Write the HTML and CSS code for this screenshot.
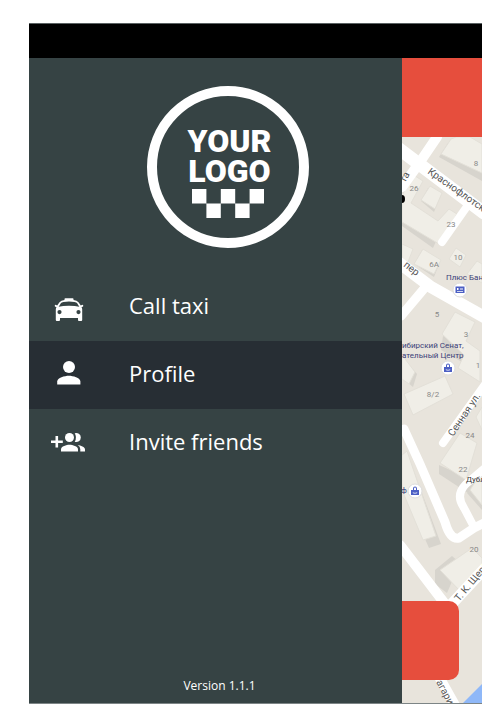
FILE: index.html
```
<!DOCTYPE html>
<html lang="en">
<head>
<meta charset="utf-8">
<meta name="viewport" content="width=device-width, initial-scale=1.0">
<title>Taxi</title>
<link rel="stylesheet" href="styles.css">
</head>
<body>
<div class="app">
  <div class="status-bar"></div>
  <div class="screen">
    <aside class="drawer">
      <div class="logo">
        <span class="logo-text">YOUR</span>
        <span class="logo-text">LOGO</span>
        <svg class="logo-checks" viewBox="0 0 5 2" aria-hidden="true">
          <path d="M0 0h1v1H0zM2 0h1v1H2zM4 0h1v1H4zM1 1h1v1H1zM3 1h1v1H3z"/>
        </svg>
      </div>

      <nav class="menu">
        <a class="menu-item" href="#taxi">
          <svg class="menu-icon" viewBox="0 0 40 40" aria-hidden="true">
            <path fill-rule="evenodd" d="M15.500 15v-1q0-.8.8-.8h7.400q.8 0 .8.800v1q3.500.2 5 2.200l2.300 3.300 1.700-.8q.7 0 .7.700v.8q0 .5-1.700.8.700 1 .7 2.500V35q0 1-1 1h-2.200q-1 0-1-1v-2H11v2q0 1-1 1H7.800q-1 0-1-1V24.500q0-1.500.7-2.500-1.700-.3-1.700-.8v-.8q0-.7.7-.7l1.700.8 2.300-3.300q1.500-2 5-2.200zM12 18l-2.300 3.800q4-1 10.300-1t10.300 1L28 18q-1-1.600-8-1.600T12 18zM10.500 25a2.100 2.100 0 1 0 0 4.200 2.100 2.100 0 0 0 0-4.200zM29.500 25a2.100 2.100 0 1 0 0 4.200 2.100 2.100 0 0 0 0-4.200z"/>
          </svg>
          <span>Call taxi</span>
        </a>
        <a class="menu-item active" href="#profile">
          <svg class="menu-icon" viewBox="0 -2 40 40" aria-hidden="true">
            <circle cx="20" cy="12" r="6"/>
            <path d="M8.200 29.500v-3c0-3.700 7.600-5.800 11.600-5.800s11.600 2.100 11.600 5.800v3z"/>
          </svg>
          <span>Profile</span>
        </a>
        <a class="menu-item" href="#invite">
          <svg class="menu-icon" viewBox="0 -2 40 40" aria-hidden="true">
            <path d="M6.500 13h2.600v4.500h4.700v2.600H9.100v4.500H6.500v-4.500H2v-2.600h4.500z"/>
            <circle cx="20.500" cy="14.500" r="4.500"/>
            <path d="M12 28.500v-2.300c0-3 5.500-4.500 8.500-4.500s8.500 1.500 8.500 4.500v2.300z"/>
            <path d="M25.700 10.300a4.500 4.500 0 1 1 0 8.400q2.600-4.200 0-8.400zM28.700 22c3 .4 7.300 1.900 7.300 4.400v2.100h-4.700v-2.300q0-2.600-2.600-4.200z"/>
          </svg>
          <span>Invite friends</span>
        </a>
      </nav>

      <p class="version">Version 1.1.1</p>
    </aside>

    <main class="content">
      <header class="toolbar"></header>
      <div class="map">
        <svg class="map-canvas" viewBox="402 137 80 566" preserveAspectRatio="xMinYMin slice" role="img" aria-label="Map">
          <rect class="land" x="402" y="137" width="100" height="600"/>

          <!-- building shadows -->
          <g class="shadow">
            <path d="M439 157 448 143 482 162V181z"/>
            <path d="M402 204l36 33-5 11-31-22z"/>
            <path d="M421 201 428 188 441 195 434 212z"/>
            <path d="M414 264 422 250 440 262 434 277z"/>
            <path d="M443 336l31 17-5 13-28-16z"/>
            <path d="M402 356l15 18-4 13-11-9z"/>
            <path d="M402 474l10-8 29 78-12 4-27-62z"/>
            <path d="M439 465l38 17-9 11-29-19z"/>
            <path d="M435 570l17-14 8 7-13 30-12-9z"/>
            <path d="M467 493l15-11v28z"/>
          </g>

          <g class="building">
            <path d="M441 154 451 139 456 137H470L482 144V173z"/>
            <path d="M402 196 412 174 423 181 411 203 438 221 449 209 457 214 439 244 402 222z"/>
            <path d="M421 200 430 186 442 193 435 209z"/>
            <path d="M402 244 413 249 408 262 402 259z"/>
            <path d="M414 264 423 249 441 260 434 274z"/>
            <path d="M449 259 456 248 466 255 460 267z"/>
            <path d="M467 274 477 261 482 264V283z"/>
            <path d="M442 334 455 312 475 322 466 341 480 351V382L458 368 464 355z"/>
            <path d="M402 355 415 372 409 384 402 379z"/>
            <path d="M404 394 445 376 453 394 413 415z"/>
            <path d="M402 455 407 451 436 536 423 540 402 490z"/>
            <path d="M440 463 460 433 477 443 466 480z"/>
            <path d="M470 490 482 472V505z"/>
            <path d="M440 570 472 548 482 558V566L459 590z"/>
            <path d="M476 417 482 407V430z"/>
          </g>

          <g class="road">
            <path d="M398 148 484 213" stroke-width="13"/>
            <path d="M402 187 420 162 437 137" stroke-width="10"/>
            <path d="M442 242 468 205" stroke-width="8"/>
            <path d="M398 262 431 287 486 318" stroke-width="12"/>
            <path d="M401 316 428 284" stroke-width="9"/>
            <path d="M443 443 486 383" stroke-width="8"/>
            <path d="M404 429 420 464 445 522Q450 540 459 538L474 528 486 522" stroke-width="9"/>
            <path d="M486 467 466 484Q455 495 464 508L474 527" stroke-width="8"/>
            <path d="M400 545 452 613" stroke-width="10"/>
            <path d="M448 608 486 567" stroke-width="11"/>
            <path d="M438 675 456 707" stroke-width="10"/>
          </g>
          <path class="water" d="M463 703 482 684V703z"/>
          <path d="M402 195a3 4 0 0 1 0 8z"/>

          <g class="number">
            <text x="476" y="166">8</text>
            <text x="414" y="191">26</text>
            <text x="451" y="227">23</text>
            <text x="458" y="260">10</text>
            <text x="434" y="267">6A</text>
            <text x="437" y="317">5</text>
            <text x="466" y="337">3</text>
            <text x="478" y="368">1</text>
            <text x="433" y="397">8/2</text>
            <text x="470" y="438">24</text>
            <text x="463" y="472">22</text>
            <text x="474" y="552">20</text>
          </g>

          <g class="street">
            <text transform="translate(427 173) rotate(35)">Краснофлотская</text>
            <text transform="translate(405 183) rotate(-60)">та</text>
            <text transform="translate(403 266) rotate(38)">пер</text>
            <text transform="translate(453 437) rotate(-56)">Сенная ул.</text>
            <text transform="translate(459 602) rotate(-50)">Т. К. Щерба</text>
            <text transform="translate(436 682) rotate(62)">агарина</text>
          </g>

          <g class="place">
            <text x="446" y="280">Плюс Банк</text>
            <text x="402" y="348">ибирский Сенат,</text>
            <text x="402" y="358">ательный Центр</text>
            <text x="401" y="493">ф</text>
            <text class="dark" x="466" y="482">Дубль</text>
          </g>

          <g class="pin">
            <circle cx="460" cy="290" r="7"/>
            <circle cx="448" cy="368" r="7"/>
            <circle cx="415" cy="491" r="7"/>
          </g>
          <g class="pin-icon">
            <path fill-rule="evenodd" d="M455.500 286.500h9v6.500h-9zM457 288v2h1.500v-2zM460 288.500v1h3v-1zM457 291v.8h6V291z"/>
            <path id="bag" fill-rule="evenodd" d="M444 367h2v-1.500q0-2 2-2t2 2v1.500h2v5h-8zM447 367h2v-1.500q0-1-1-1t-1 1zM445.500 369l1 1.500h3l1-1.500-1.500.7h-2z"/>
            <use href="#bag" x="-33" y="123"/>
          </g>
        </svg>
        <button class="map-button" type="button" aria-label="Order"></button>
      </div>
    </main>
  </div>
</div>
</body>
</html>
```
FILE: styles.css
```
* {
  box-sizing: border-box;
}
body {
  margin: 0;
  padding: 23px 21px 25px 29px;
  min-height: 100vh;
  display: flex;
  background: #fff;
  font-family: "Open Sans", "Noto Sans", sans-serif;
}
.app {
  flex: 1;
  display: flex;
  flex-direction: column;
  border-bottom: 1px solid #7d8586;
}
.status-bar {
  height: 35px;
  background: #000;
  border-top: 1px solid #5a6162;
}
.screen {
  flex: 1;
  display: flex;
}

/* drawer */
.drawer {
  flex: 1;
  display: flex;
  flex-direction: column;
  background: #364344;
  color: #fff;
}
.logo {
  align-self: center;
  display: flex;
  flex-direction: column;
  align-items: center;
  width: 162px;
  height: 162px;
  margin: 28px 0 25px 24px;
  padding-top: 30px;
  border: 10px solid #fff;
  border-radius: 50%;
}
.logo-text {
  padding-left: 4px;
  font-family: Roboto, sans-serif;
  font-size: 32px;
  font-weight: 900;
  line-height: 30px;
}
.logo-checks {
  width: 72px;
  height: 29px;
  margin-top: 3px;
  fill: #fff;
}
.menu-item {
  display: flex;
  align-items: center;
  gap: 40px;
  height: 68px;
  padding: 0 20px 5px;
  color: #fff;
  font-size: 22px;
  line-height: 28px;
  text-decoration: none;
}
.menu-item.active {
  background: #272e34;
}
.menu-icon {
  width: 40px;
  height: 40px;
  fill: #fff;
}
.version {
  margin: auto 0 8px;
  padding-left: 8px;
  font-size: 12px;
  line-height: 18px;
  text-align: center;
}

/* page behind the drawer */
.content {
  flex: 0 0 80px;
  display: flex;
  flex-direction: column;
}
.toolbar {
  height: 79px;
  background: #e64e3d;
}
.map {
  position: relative;
  flex: 1;
  overflow: hidden;
}
.map-canvas {
  display: block;
  width: 100%;
  height: 100%;
}
.map-button {
  position: absolute;
  left: 0;
  bottom: 23px;
  width: 57px;
  height: 79px;
  border: 0;
  border-radius: 0 10px 10px 0;
  background: #e64e3d;
}

.land { fill: #e8e4dc; }
.shadow { fill: #d7d4cd; }
.building { fill: #f0eee7; stroke: #e3e0d8; }
.water { fill: #8fb8f8; }
.road {
  fill: none;
  stroke: #fff;
  stroke-linecap: round;
  stroke-linejoin: round;
}
.number {
  fill: #888;
  font: 8px Roboto, sans-serif;
  text-anchor: middle;
}
.street {
  fill: #555;
  font: 10px Roboto, sans-serif;
}
.place {
  fill: #3b3f78;
  font: 8px Roboto, sans-serif;
}
.place .dark { fill: #333; }
.pin { fill: #fff; stroke: #ddd; }
.pin-icon { fill: #4c5fc4; }
```
